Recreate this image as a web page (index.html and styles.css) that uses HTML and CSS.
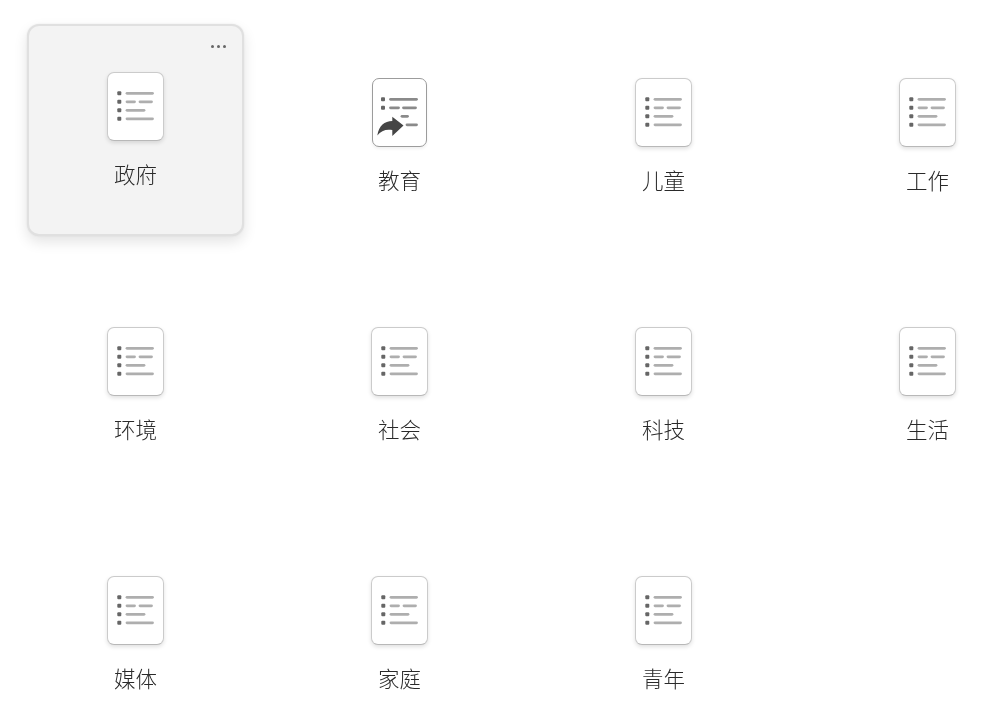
FILE: index.html
```html
<!DOCTYPE html>
<html lang="zh-CN">
<head>
<meta charset="utf-8">
<title>分类</title>
<link rel="stylesheet" href="styles.css">
</head>
<body>
<svg class="defs" width="0" height="0" aria-hidden="true">
  <symbol id="list-lines" viewBox="0 0 55 67">
    <g class="dots">
      <rect x="9.300" y="18.300" width="4" height="4" rx="1"/>
      <rect x="9.300" y="26.800" width="4" height="4" rx="1"/>
      <rect x="9.300" y="35.300" width="4" height="4" rx="1"/>
      <rect x="9.300" y="43.800" width="4" height="4" rx="1"/>
    </g>
    <g class="lines">
      <path d="M19 20.300H44.500"/>
      <path d="M19 28.800H26.500"/>
      <path d="M32 28.800H43.500"/>
      <path d="M19 37.300H36"/>
      <path d="M19 45.800H44.500"/>
    </g>
  </symbol>
  <symbol id="list-shared" viewBox="2 0 53 67">
    <g class="dots">
      <rect x="10" y="18.300" width="4" height="4" rx="1"/>
      <rect x="10" y="26.800" width="4" height="4" rx="1"/>
    </g>
    <g class="lines dark">
      <path d="M19.500 20.300H45.500"/>
      <path d="M19.500 28.800H27.500"/>
      <path d="M32.500 28.800H44.500"/>
      <path d="M31 37.300H36.500"/>
      <path d="M36 45.800H45.500"/>
    </g>
    <path class="arrow" d="M6.300 56.500C8 46.500 13.500 42.200 21.300 42V37.700L32.500 46.500 21.300 57V51C15 50 10 51.500 6.300 56.500Z"/>
  </symbol>
</svg>

<main class="grid">
  <article class="tile is-active">
    <span class="more" aria-label="更多"><i></i><i></i><i></i></span>
    <span class="doc"><svg class="doc-art"><use href="#list-lines"/></svg></span>
    <h2 class="name">政府</h2>
  </article>
  <article class="tile">
    <span class="doc doc-shared"><svg class="doc-art"><use href="#list-shared"/></svg></span>
    <h2 class="name">教育</h2>
  </article>
  <article class="tile">
    <span class="doc"><svg class="doc-art"><use href="#list-lines"/></svg></span>
    <h2 class="name">儿童</h2>
  </article>
  <article class="tile">
    <span class="doc"><svg class="doc-art"><use href="#list-lines"/></svg></span>
    <h2 class="name">工作</h2>
  </article>
  <article class="tile">
    <span class="doc"><svg class="doc-art"><use href="#list-lines"/></svg></span>
    <h2 class="name">环境</h2>
  </article>
  <article class="tile">
    <span class="doc"><svg class="doc-art"><use href="#list-lines"/></svg></span>
    <h2 class="name">社会</h2>
  </article>
  <article class="tile">
    <span class="doc"><svg class="doc-art"><use href="#list-lines"/></svg></span>
    <h2 class="name">科技</h2>
  </article>
  <article class="tile">
    <span class="doc"><svg class="doc-art"><use href="#list-lines"/></svg></span>
    <h2 class="name">生活</h2>
  </article>
  <article class="tile">
    <span class="doc"><svg class="doc-art"><use href="#list-lines"/></svg></span>
    <h2 class="name">媒体</h2>
  </article>
  <article class="tile">
    <span class="doc"><svg class="doc-art"><use href="#list-lines"/></svg></span>
    <h2 class="name">家庭</h2>
  </article>
  <article class="tile">
    <span class="doc"><svg class="doc-art"><use href="#list-lines"/></svg></span>
    <h2 class="name">青年</h2>
  </article>
</main>
</body>
</html>
```
FILE: styles.css
```css
html, body {
  margin: 0;
  background: #fff;
  overflow: hidden;
}

body {
  font-family: "Noto Sans CJK SC", "Noto Sans", sans-serif;
  color: #333;
}

.defs {
  display: block;
  height: 0;
}

.grid {
  display: grid;
  grid-template-columns: repeat(4, 217px);
  grid-auto-rows: 212px;
  column-gap: 47px;
  row-gap: 37px;
  padding: 29.5px 0 0 27px;
}

.tile {
  box-sizing: border-box;
  display: flex;
  flex-direction: column;
  align-items: center;
  padding-top: 46.5px;
  border: 2px solid transparent;
  border-radius: 12px;
  position: relative;
}

.tile.is-active {
  transform: translateY(-6px);
  background: #f3f3f3;
  border-color: #e0e0e0;
  box-shadow: 0 0 2px rgba(0, 0, 0, 0.08), 0 6px 14px rgba(0, 0, 0, 0.11);
}

.more {
  position: absolute;
  top: 19px;
  right: 16px;
  display: flex;
  gap: 3px;
  filter: blur(0.3px);
}

.more i {
  width: 3px;
  height: 3px;
  border-radius: 50%;
  background: #666;
}

.doc {
  box-sizing: border-box;
  display: block;
  width: 57px;
  height: 69px;
  background: #fff;
  border: 1px solid #cbcbcb;
  border-bottom-color: #b8b8b8;
  border-radius: 7px;
  box-shadow: 0 2px 4px rgba(0, 0, 0, 0.12);
}

.doc-shared {
  width: 55px;
  border-color: #9c9c9c;
  box-shadow: 0 2px 3px rgba(0, 0, 0, 0.06);
}

.doc-art {
  display: block;
  width: 100%;
  height: 100%;
  filter: blur(0.35px);
}

.dots rect {
  fill: #666;
}

.lines path {
  fill: none;
  stroke: #aeaeae;
  stroke-width: 2.8;
  stroke-linecap: round;
}

.lines.dark path {
  stroke: #8a8a8a;
}

.arrow {
  fill: #454545;
}

.name {
  margin: 18px 0 0;
  font-size: 21.5px;
  font-weight: 300;
  line-height: 30px;
  color: #2a2a2a;
  will-change: opacity;
}
```
